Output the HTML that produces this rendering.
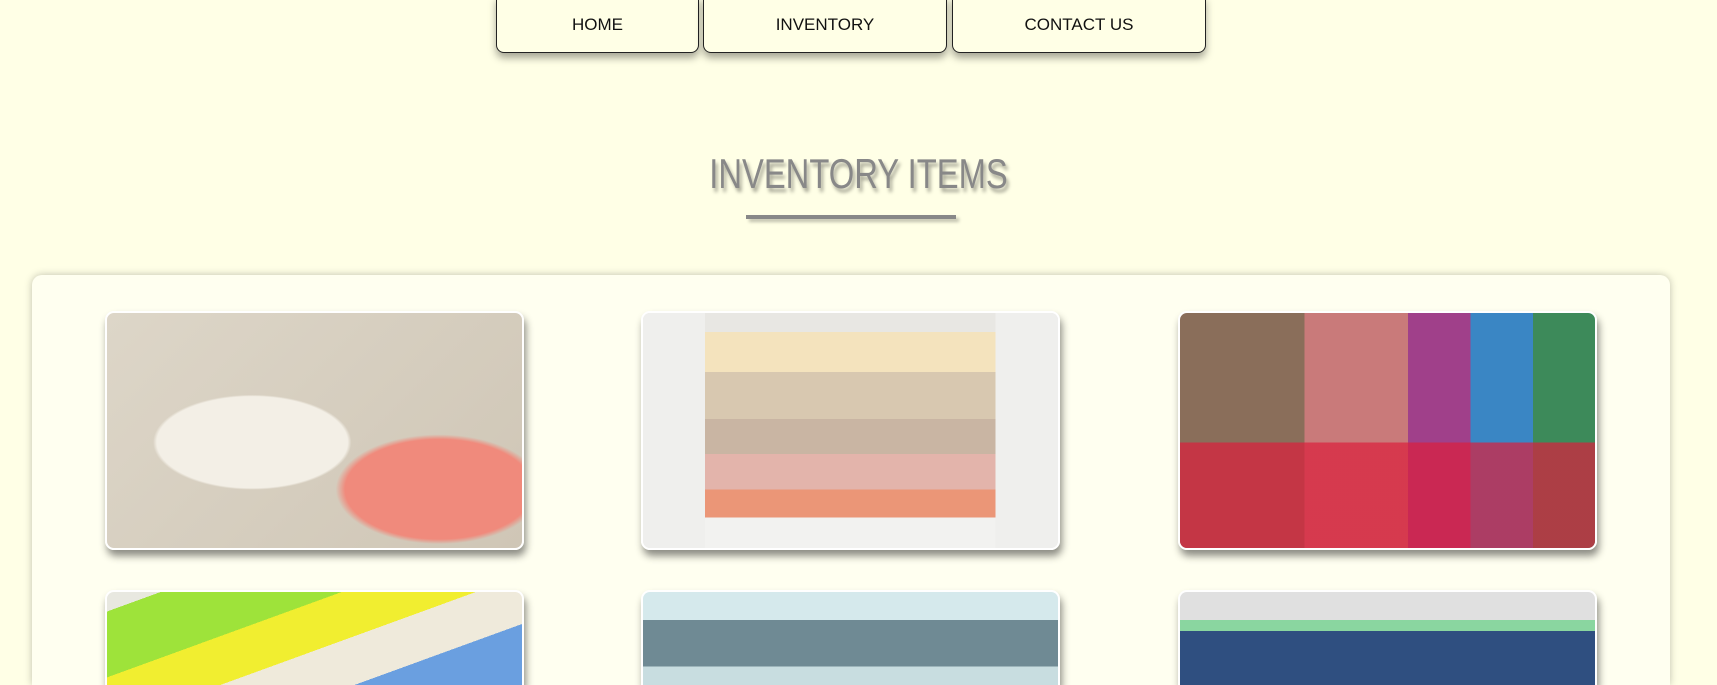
<!DOCTYPE html>
<html style="height:685px;overflow:hidden"><head><meta charset="utf-8"><style>
*{margin:0;padding:0;box-sizing:border-box}
body{width:1717px;height:685px;overflow:hidden;background:#ffffe6;font-family:"Liberation Sans",sans-serif;position:relative}
.btn{position:absolute;top:-4px;height:57px;border:1.5px solid #222;border-radius:0 0 8px 8px;background:#ffffe6;box-shadow:0 5px 8px rgba(0,0,0,.35);display:flex;align-items:center;justify-content:center;font-size:17px;color:#111;padding-top:1px}
h1{position:absolute;left:0;width:1717px;top:150px;text-align:center;font-family:"Liberation Sans Narrow","Liberation Sans",sans-serif;font-weight:normal;font-size:42px;color:#888;text-shadow:3px 4px 4px rgba(0,0,0,.35);transform:scaleX(.78)}
.ul{position:absolute;left:746px;top:215px;width:210px;height:4px;background:#888;box-shadow:3px 3px 3px rgba(0,0,0,.25)}
.panel{position:absolute;left:32px;top:275px;width:1638px;height:410px;border-radius:10px 10px 0 0;background:#fffff0;box-shadow:0 0 8px rgba(0,0,0,.25)}
.img{position:absolute;width:419px;height:239px;border-radius:9px;border:2px solid #fff;box-shadow:2px 6px 8px rgba(0,0,0,.45);overflow:hidden}
.r2{height:95px;border-radius:9px 9px 0 0;border-bottom:0}
</style></head><body>
<div class="btn" style="left:496px;width:203px">HOME</div>
<div class="btn" style="left:703px;width:244px">INVENTORY</div>
<div class="btn" style="left:952px;width:254px">CONTACT US</div>
<h1>INVENTORY ITEMS</h1>
<div class="ul"></div>
<div class="panel"></div>
<div class="img" style="left:105px;top:311px;background:radial-gradient(ellipse at 35% 55%,#f3efe6 0 25%,transparent 26%),radial-gradient(ellipse at 80% 75%,#f08a7c 0 20%,transparent 22%),linear-gradient(135deg,#ddd6c8,#cfc6b6)"></div>
<div class="img" style="left:641px;top:311px;background:linear-gradient(180deg,#e8e7e3 0 8%,#f4e3bd 8% 25%,#d8c8b0 25% 45%,#c9b5a3 45% 60%,#e3b4ab 60% 75%,#eb9677 75% 87%,#f2f2f0 87%)"><div style="position:absolute;inset:0;background:linear-gradient(90deg,#efefed 0 15%,transparent 15% 85%,#efefed 85%)"></div></div>
<div class="img" style="left:1178px;top:311px;background:linear-gradient(90deg,#8a6e5a 0 30%,#c97a7a 30% 55%,#a0408a 55% 70%,#3a86c4 70% 85%,#3d8a5a 85%)"><div style="position:absolute;inset:0;background:linear-gradient(180deg,transparent 0 55%,rgba(220,30,60,.7) 55%)"></div></div>
<div class="img r2" style="left:105px;top:590px;background:linear-gradient(160deg,#e8e8e0 0 8%,#9ee33a 8% 35%,#f1ee30 35% 55%,#efeadb 55% 75%,#6a9fe0 75%)"></div>
<div class="img r2" style="left:641px;top:590px;background:linear-gradient(180deg,#d5e9ec 0 30%,#6f8a94 30% 80%,#c8dde0 80%)"></div>
<div class="img r2" style="left:1178px;top:590px;background:linear-gradient(180deg,#e0e0e0 0 30%,#8ad6a0 30% 42%,#2f4f80 42%)"></div>
</body></html>
